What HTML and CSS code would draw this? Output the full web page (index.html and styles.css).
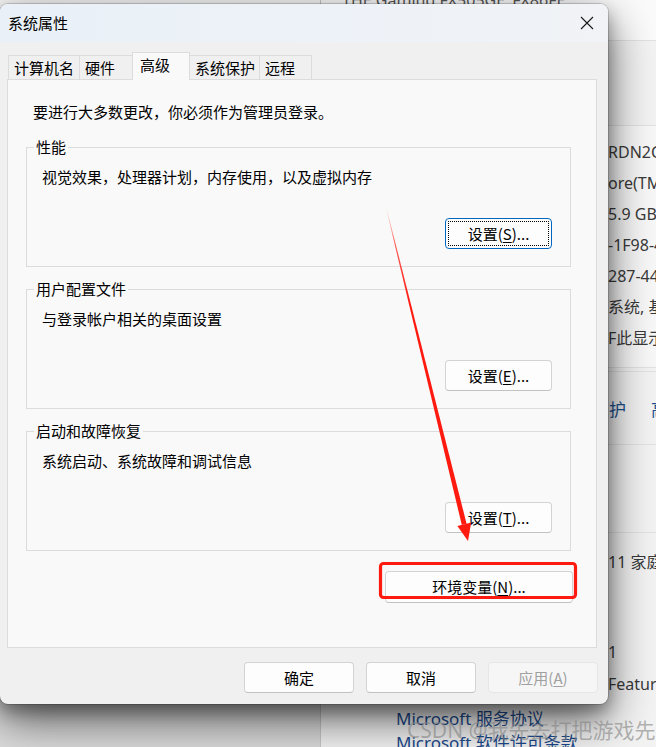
FILE: index.html
```html
<!DOCTYPE html>
<html lang="zh-CN">
<head>
<meta charset="utf-8">
<title>系统属性</title>
<link rel="stylesheet" href="styles.css">
</head>
<body>
<div class="desk">
  <div class="other-win"></div>
  <div class="settings">
    <div class="s-head"><span class="s-title">THE Gaming FX505GE_FX86FE</span></div>
    <div class="s-gap1"></div>
    <div class="s-card">
      <div class="s-row">RDN2C6K</div>
      <div class="s-row">ore(TM) i7</div>
      <div class="s-row">5.9 GB</div>
      <div class="s-row">-1F98-4A</div>
      <div class="s-row">287-44B</div>
      <div class="s-row">系统, 基于</div>
      <div class="s-row">F此显示</div>
    </div>
    <div class="s-gap2"></div>
    <div class="s-tabs"><span>护</span><span>高</span></div>
    <div class="s-gap3"></div>
    <div class="s-card2">
      <div class="s-row2">11 家庭中文版</div>
      <div class="s-spacer"></div>
      <div class="s-row2"></div>
      <div class="s-row2">1</div>
      <div class="s-row2">Feature</div>
    </div>
    <div class="s-links">
      <div class="s-link">Microsoft 服务协议</div>
      <div class="s-link">Microsoft 软件许可条款</div>
    </div>
  </div>

  <div class="dialog">
    <div class="titlebar">
      <span class="title">系统属性</span>
      <svg class="close" width="14" height="14" viewBox="0 0 14 14"><path d="M1 1 L13 13 M13 1 L1 13" stroke="#1a1a1a" stroke-width="1.1" fill="none"/></svg>
    </div>
    <div class="dlg-body">
      <div class="tabs">
        <div class="tab t1">计算机名</div>
        <div class="tab t2">硬件</div>
        <div class="tab t3 active">高级</div>
        <div class="tab t4">系统保护</div>
        <div class="tab t5">远程</div>
      </div>
      <div class="panel">
        <p class="intro">要进行大多数更改，你必须作为管理员登录。</p>
        <fieldset class="group">
          <legend>性能</legend>
          <p class="desc">视觉效果，处理器计划，内存使用，以及虚拟内存</p>
          <div class="btn-row"><button class="btn focus">设置(<u>S</u>)...</button></div>
        </fieldset>
        <fieldset class="group">
          <legend>用户配置文件</legend>
          <p class="desc">与登录帐户相关的桌面设置</p>
          <div class="btn-row"><button class="btn">设置(<u>E</u>)...</button></div>
        </fieldset>
        <fieldset class="group">
          <legend>启动和故障恢复</legend>
          <p class="desc">系统启动、系统故障和调试信息</p>
          <div class="btn-row"><button class="btn">设置(<u>T</u>)...</button></div>
        </fieldset>
        <div class="env-row"><button class="btn btn-wide">环境变量(<u>N</u>)...</button></div>
      </div>
      <div class="footer">
        <button class="btn btn-foot">确定</button>
        <button class="btn btn-foot">取消</button>
        <button class="btn btn-foot disabled">应用(<u>A</u>)</button>
      </div>
    </div>
  </div>

  <div class="watermark">CSDN @我先去打把游戏先</div>

  <svg class="annot" width="656" height="747" viewBox="0 0 656 747">
    <defs>
      <linearGradient id="fade" gradientUnits="userSpaceOnUse" x1="386" y1="207" x2="466" y2="530">
        <stop offset="0" stop-color="#ff1a10" stop-opacity="0"/>
        <stop offset="0.12" stop-color="#ff1a10" stop-opacity="0.7"/>
        <stop offset="0.3" stop-color="#ff1a10" stop-opacity="1"/>
        <stop offset="1" stop-color="#ff1a10" stop-opacity="1"/>
      </linearGradient>
    </defs>
    <polygon points="385.7,207.1 386.3,206.9 466.6,523.8 461.8,525.0" fill="url(#fade)"/>
    <polygon points="468,541 471.2,522.6 457.4,526.1" fill="#ff1a10"/>
    <rect x="380.5" y="563.5" width="195" height="34" rx="3" ry="3" fill="none" stroke="#ff1a10" stroke-width="3.2"/>
  </svg>
</div>
</body>
</html>
```

FILE: styles.css
```css
html, body {
  margin: 0;
  padding: 0;
}
body {
  width: 656px;
  height: 747px;
  overflow: hidden;
  font-family: "Noto Sans CJK SC", "Noto Sans", sans-serif;
}
.desk {
  position: relative;
  width: 656px;
  height: 747px;
  background: #dcdcdc;
  overflow: hidden;
}
.other-win {
  position: absolute;
  left: 0;
  top: 0;
  width: 320px;
  height: 60px;
  background: #f7f7f7;
}

/* background Settings window */
.settings {
  position: absolute;
  left: 320px;
  top: 0;
  width: 336px;
  height: 747px;
  box-sizing: border-box;
  background: #f3f3f3;
  border-left: 1px solid #c8c8c8;
  font-family: "Noto Sans", "Noto Sans CJK SC", sans-serif;
  color: #3a3a3a;
}
.s-head {
  height: 40px;
  background: #fbfbfb;
  border-bottom: 1px solid #e2e2e2;
  overflow: hidden;
}
.s-title {
  display: block;
  margin: -10px 0 0 21px;
  font-size: 16px;
  line-height: 20px;
  color: #555;
  white-space: nowrap;
}
.s-gap1 { height: 84px; }
.s-card {
  background: #f8f8f8;
  border-top: 1px solid #e2e2e2;
  border-bottom: 1px solid #e2e2e2;
  padding: 11px 0 13px 287px;
}
.s-row {
  font-size: 16px;
  line-height: 31px;
  white-space: nowrap;
}
.s-gap2 { height: 3px; }
.s-tabs {
  height: 72px;
  border-top: 1px solid #e2e2e2;
  border-bottom: 1px solid #e2e2e2;
  display: flex;
  align-items: center;
  gap: 25px;
  padding-left: 288px;
  font-size: 17px;
  color: #1a4f8f;
  font-family: "Noto Sans CJK SC", sans-serif;
}
.s-gap3 { height: 87px; }
.s-card2 {
  border-top: 1px solid #e2e2e2;
  padding: 13px 0 0 287px;
}
.s-row2 {
  font-size: 16px;
  line-height: 32px;
  height: 32px;
  white-space: nowrap;
}
.s-spacer { height: 26px; }
.s-links {
  margin-top: 7px;
  padding-left: 75px;
}
.s-link {
  font-size: 17px;
  line-height: 24px;
  color: #1c4a8c;
  white-space: nowrap;
}

/* dialog */
.dialog {
  position: absolute;
  left: 0;
  top: 4px;
  width: 608px;
  height: 700px;
  background: #f0f0f0;
  border-radius: 8px;
  overflow: hidden;
  box-shadow: 0 0 0 1px rgba(0, 0, 0, 0.16), 0 8px 16px rgba(0, 0, 0, 0.3), 0 16px 46px rgba(0, 0, 0, 0.6);
  display: flex;
  flex-direction: column;
  color: #000;
}
.titlebar {
  height: 38px;
  flex: none;
  display: flex;
  align-items: center;
  justify-content: space-between;
  padding: 0 14px 0 8px;
  background: linear-gradient(90deg, #e9f0f7 0%, #edf2f8 55%, #f1f3f6 100%);
}
.title {
  font-size: 15px;
  line-height: 20px;
}
.close { display: block; }
.dlg-body {
  padding: 10px 11px 11px 7px;
}
.tabs {
  display: flex;
  align-items: flex-end;
  margin-left: 1px;
  position: relative;
  z-index: 1;
}
.tab {
  box-sizing: border-box;
  height: 24px;
  border: 1px solid #dcdcdc;
  border-bottom: none;
  background: #f0f0f0;
  margin-left: -1px;
  padding: 1px 0 0 5px;
  font-size: 15px;
  line-height: 22px;
  white-space: nowrap;
}
.tab.t1 { width: 72px; margin-left: 0; }
.tab.t2 { width: 54px; }
.tab.t3 { width: 58px; }
.tab.t4 { width: 71px; }
.tab.t5 { width: 53px; }
.tab.active {
  height: 28px;
  margin-bottom: -1px;
  background: #f9f9f9;
  padding: 0 0 0 7px;
  line-height: 24px;
  position: relative;
  z-index: 2;
}
.panel {
  box-sizing: border-box;
  height: 569px;
  border: 1px solid #dcdcdc;
  background: #f9f9f9;
  padding: 22px 25px 0 18px;
}
.intro {
  margin: 0;
  padding-left: 7px;
  font-size: 15px;
  line-height: 20px;
}
.group {
  margin: 15px 0 0;
  padding: 10px 18px 17px 15px;
  border: 1px solid #dcdcdc;
  min-width: 0;
}
.group + .group { margin-top: 12px; }
.group legend {
  padding: 0 2px;
  margin-left: -8px;
  font-size: 15px;
  line-height: 20px;
}
.desc {
  margin: 0;
  font-size: 15px;
  line-height: 20px;
}
.btn-row {
  margin-top: 31px;
  display: flex;
  justify-content: flex-end;
}
.btn {
  box-sizing: border-box;
  width: 107px;
  height: 31px;
  padding: 0;
  border: 1px solid #d3d3d3;
  border-bottom-color: #c2c2c2;
  border-radius: 4px;
  background: #fdfdfd;
  font-family: "Noto Sans CJK SC", "Noto Sans", sans-serif;
  font-size: 15px;
  line-height: 20px;
  color: #000;
}
.btn u { text-underline-offset: 2px; }
.btn.focus {
  border-color: #0067c0;
  outline: 1px dotted #000;
  outline-offset: -4px;
}
.env-row {
  margin-top: 20px;
  margin-right: -2px;
  display: flex;
  justify-content: flex-end;
}
.btn-wide {
  width: 188px;
  height: 32px;
}
.footer {
  margin-top: 14px;
  margin-right: -1px;
  display: flex;
  justify-content: flex-end;
  gap: 12px;
}
.btn-foot { width: 110px; }
.btn.disabled {
  background: #f6f6f6;
  border-color: #e6e6e6;
  color: #a0a0a0;
}

.watermark {
  position: absolute;
  left: 407px;
  top: 716px;
  font-size: 21px;
  line-height: 28px;
  color: rgba(130, 130, 130, 0.6);
  white-space: nowrap;
  font-family: "Noto Sans", "Noto Sans CJK SC", sans-serif;
}
.annot {
  position: absolute;
  left: 0;
  top: 0;
  pointer-events: none;
}
```
